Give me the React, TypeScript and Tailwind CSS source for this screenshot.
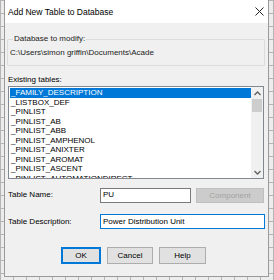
export default function App() {
  const rows = [
    "_FAMILY_DESCRIPTION",
    "_LISTBOX_DEF",
    "_PINLIST",
    "_PINLIST_AB",
    "_PINLIST_ABB",
    "_PINLIST_AMPHENOL",
    "_PINLIST_ANIXTER",
    "_PINLIST_AROMAT",
    "_PINLIST_ASCENT",
    "_PINLIST_AUTOMATIONDIRECT",
  ];
  return (
    <div className="w-[274px] h-[280px] overflow-hidden bg-[#ececec] bg-[linear-gradient(to_right,#b4b4b4_1px,transparent_1px),linear-gradient(to_bottom,#b4b4b4_1px,transparent_1px)] bg-[size:13px_13px] font-['Liberation_Sans',Arial,sans-serif] text-[8px] leading-[10px] text-black">
      <div className="ml-[4px] w-[265px] h-[277px] border-x border-b border-[#9a9a9a] flex flex-col bg-[#f0f0f0]">
        <div className="h-[23px] shrink-0 bg-white flex items-center pl-[3px] pr-[4px]">
          <span className="text-[8.5px]">Add New Table to Database</span>
          <svg className="ml-auto" width="9" height="9" viewBox="0 0 9 9">
            <path d="M0.5 0.5L8.5 8.5M8.5 0.5L0.5 8.5" stroke="#222" strokeWidth="1" fill="none" />
          </svg>
        </div>
        <div className="flex-1 flex flex-col pl-[3px] pr-[3px]">
          <div className="relative mt-[16px] -ml-[1px] h-[27px] border border-[#dcdcdc] rounded-[1px]">
            <span className="absolute -top-[6px] left-[5px] bg-[#f0f0f0] px-[1px] text-[#222]">Database to modify:</span>
            <div className="pl-[2px] pt-[8px] text-[#222] whitespace-nowrap overflow-hidden">C:\Users\simon griffin\Documents\Acade</div>
          </div>
          <div className="mt-[9px] h-[10px]">Existing tables:</div>
          <div className="mt-[1px] mr-[1px] h-[93px] border border-[#828790] bg-white flex overflow-hidden">
            <div className="flex-1 pt-[1px] pl-[1px] overflow-hidden">
              {rows.map((r, i) => (
                <div
                  key={r}
                  className={
                    i === 0
                      ? "h-[9.5px] leading-[9.5px] pl-[1px] bg-[#0078d7] text-white whitespace-nowrap"
                      : "h-[9.5px] leading-[9.5px] pl-[1px] text-black whitespace-nowrap"
                  }
                >
                  {r}
                </div>
              ))}
            </div>
            <div className="w-[12px] bg-[#f0f0f0] flex flex-col items-center">
              <div className="h-[12px] w-full flex items-center justify-center">
                <svg width="7" height="5" viewBox="0 0 7 5">
                  <path d="M0.5 4L3.5 1L6.5 4" stroke="#606060" strokeWidth="1.3" fill="none" />
                </svg>
              </div>
              <div className="w-[10px] h-[13px] bg-[#cdcdcd]" />
              <div className="flex-1" />
              <div className="h-[12px] w-full flex items-center justify-center">
                <svg width="7" height="5" viewBox="0 0 7 5">
                  <path d="M0.5 1L3.5 4L6.5 1" stroke="#606060" strokeWidth="1.3" fill="none" />
                </svg>
              </div>
            </div>
          </div>
          <div className="mt-[8px] flex items-center h-[16px]">
            <div className="w-[92px]">Table Name:</div>
            <div className="w-[91px] h-[15px] border border-[#7a7a7a] bg-white flex items-center pl-[2px]">PU</div>
            <div className="ml-[5px] w-[68px] h-[15px] mt-[1px] bg-[#cccccc] border border-[#bfbfbf] text-[#a3a3a3] flex items-center justify-center">Component</div>
          </div>
          <div className="mt-[11px] flex items-center h-[15px]">
            <div className="w-[92px]">Table Description:</div>
            <div className="w-[165px] h-[15px] border border-[#0078d7] bg-white flex items-center pl-[2px]">Power Distribution Unit</div>
          </div>
          <div className="mt-[18px] flex pl-[53px] gap-[6px]">
            <div className="w-[40px] h-[17px] bg-[#e1e1e1] border-2 border-[#0078d7] flex items-center justify-center">OK</div>
            <div className="w-[46px] h-[17px] bg-[#e1e1e1] border border-[#adadad] flex items-center justify-center">Cancel</div>
            <div className="w-[47px] h-[17px] bg-[#e1e1e1] border border-[#adadad] flex items-center justify-center">Help</div>
          </div>
        </div>
      </div>
    </div>
  );
}
